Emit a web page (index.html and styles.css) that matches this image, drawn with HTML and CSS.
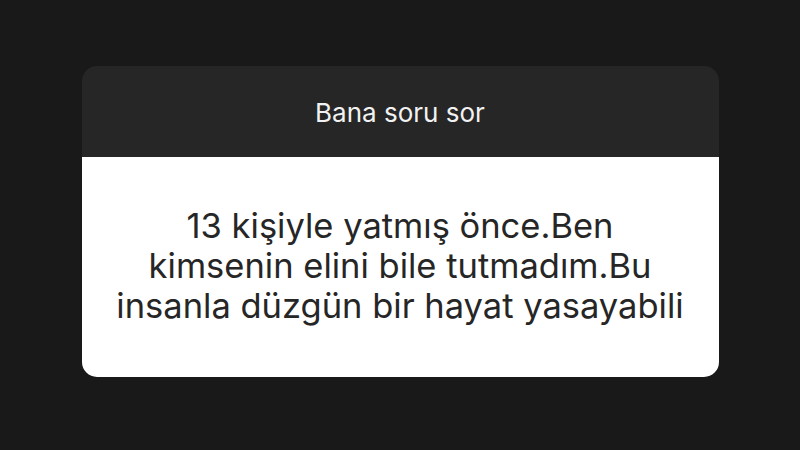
FILE: index.html
```html
<!DOCTYPE html>
<html>
<head>
    <title>Bana soru sor</title>
    <meta charset="UTF-8">
    <link rel="stylesheet" href="styles.css">
</head>
<body>
    <div class="question-card">
        <div class="card-header">Bana soru sor</div>
        <div class="card-body">
            <p class="answer">13 kişiyle yatmış önce.Ben<br>kimsenin elini bile tutmadım.Bu<br>insanla düzgün bir hayat yasayabili</p>
        </div>
    </div>
</body>
</html>
```

FILE: styles.css
```css
body {
    margin: 0;
    width: 800px;
    height: 450px;
    background-color: #191919;
    font-family: Inter, 'Liberation Sans', Arial, sans-serif;
    display: flex;
    justify-content: center;
    padding-top: 66px;
    box-sizing: border-box;
}

.question-card {
    width: 637px;
    height: 311px;
    border-radius: 15px;
    overflow: hidden;
    display: flex;
    flex-direction: column;
}

.card-header {
    height: 91px;
    background-color: #262626;
    color: #f2f2f2;
    font-size: 26px;
    display: flex;
    align-items: center;
    justify-content: center;
    padding-top: 1px;
    box-sizing: border-box;
}

.card-body {
    flex: 1;
    background-color: #ffffff;
    display: flex;
    align-items: center;
    justify-content: center;
}

.answer {
    margin: 0;
    color: #262626;
    font-size: 34.5px;
    line-height: 40px;
    text-align: center;
    padding-bottom: 2px;
    white-space: nowrap;
}
```
